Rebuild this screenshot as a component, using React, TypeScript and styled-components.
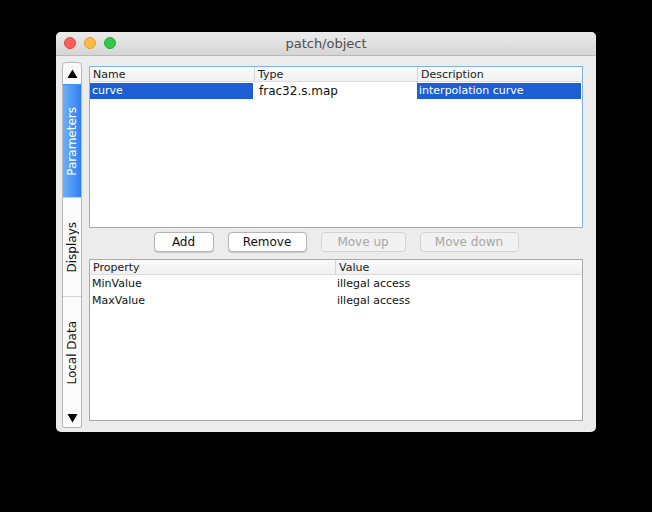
import React from "react";
import styled, { createGlobalStyle } from "styled-components";

const Global = createGlobalStyle`
  html, body { margin: 0; padding: 0; background: #000; }
  body { font-family: "DejaVu Sans", "Liberation Sans", sans-serif; }
  * { box-sizing: border-box; }
`;

const Page = styled.div`
  width: 652px;
  height: 512px;
  padding: 32px 0 0 56px;
  background: #000;
`;

const Window = styled.div`
  width: 540px;
  height: 400px;
  border-radius: 5px;
  overflow: hidden;
  background: #ececec;
  display: flex;
  flex-direction: column;
`;

const TitleBar = styled.div`
  height: 24px;
  flex: none;
  position: relative;
  display: flex;
  align-items: center;
  justify-content: center;
  background: linear-gradient(#ebebeb, #d5d5d5);
  border-bottom: 1px solid #b9b9b9;
`;

const Lights = styled.div`
  position: absolute;
  left: 8px;
  top: 5px;
  display: flex;
  gap: 8px;
`;

const Light = styled.span<{ $c: string; $b: string }>`
  width: 12px;
  height: 12px;
  border-radius: 50%;
  background: ${(p) => p.$c};
  border: 0.5px solid ${(p) => p.$b};
`;

const Title = styled.div`
  font-size: 13px;
  color: #4d4d4d;
`;

const Body = styled.div`
  flex: 1;
  display: flex;
  padding: 6px 13px 4px 6px;
  gap: 7px;
`;

const TabStrip = styled.div`
  width: 20px;
  flex: none;
  display: flex;
  flex-direction: column;
  background: #fafafa;
  border: 1px solid #b8b8b8;
  border-radius: 4px 4px 2px 2px;
  overflow: hidden;
`;

const Arrow = styled.div<{ $h: number }>`
  height: ${(p) => p.$h}px;
  flex: none;
  display: flex;
  align-items: center;
  justify-content: center;
`;

const Tab = styled.div<{ $h: number; $active?: boolean }>`
  height: ${(p) => p.$h}px;
  flex: none;
  display: flex;
  align-items: center;
  justify-content: center;
  padding-right: 1px;
  border-top: 1px solid ${(p) => (p.$active ? "#4a90ee" : "#d0d0d0")};
  background: ${(p) =>
    p.$active ? "linear-gradient(90deg, #6cb0f8, #2f7ff1)" : "#fbfbfb"};
  color: ${(p) => (p.$active ? "#fff" : "#111")};
`;

const TabLabel = styled.span`
  writing-mode: vertical-rl;
  transform: rotate(180deg);
  font-size: 12px;
  white-space: nowrap;
`;

const Main = styled.div`
  flex: 1;
  display: flex;
  flex-direction: column;
  padding: 4px 0 7px 0;
`;

const Table = styled.div<{ $focus?: boolean }>`
  height: 162px;
  flex: none;
  background: #fff;
  border: 1px solid ${(p) => (p.$focus ? "#7fb2e5" : "#a9a9a9")};
  display: flex;
  flex-direction: column;
`;

const HeaderRow = styled.div<{ $cols: string }>`
  display: grid;
  grid-template-columns: ${(p) => p.$cols};
  height: 15px;
  background: linear-gradient(#fafafa, #f1f1f1);
  border-bottom: 1px solid #dcdcdc;
`;

const HeaderCell = styled.div`
  font-size: 11px;
  color: #1a1a1a;
  padding-left: 3px;
  line-height: 15px;
  border-left: 1px solid #d6d6d6;
  &:first-child { border-left: none; }
`;

const Row = styled.div<{ $cols: string }>`
  display: grid;
  grid-template-columns: ${(p) => p.$cols};
  height: 16px;
  margin-top: 1px;
`;

const Cell = styled.div<{ $sel?: boolean; $edit?: boolean }>`
  line-height: 16px;
  white-space: nowrap;
  overflow: hidden;
  padding-left: ${(p) => (p.$edit ? "5px" : "2px")};
  margin-right: 1px;
  background: ${(p) => (p.$sel ? "#1d5fd2" : "transparent")};
  color: ${(p) => (p.$sel ? "#fff" : "#111")};
  font-size: ${(p) => (p.$edit ? "12px" : "11px")};
`;

const ButtonBar = styled.div`
  height: 31px;
  flex: none;
  display: flex;
  justify-content: center;
  align-items: flex-start;
  padding-top: 4px;
  gap: 14px;
`;

const Button = styled.button<{ $w: number }>`
  width: ${(p) => p.$w}px;
  height: 20px;
  padding: 0;
  font-family: "DejaVu Sans", sans-serif;
  font-size: 12px;
  border-radius: 4px;
  background: ${(p) => (p.disabled ? "#f1f1f1" : "#ffffff")};
  color: ${(p) => (p.disabled ? "#a6a6a6" : "#111")};
  border: 1px solid ${(p) => (p.disabled ? "#d3d3d3" : "#b4b4b4")};
  box-shadow: ${(p) => (p.disabled ? "none" : "0 0.5px 1px rgba(0,0,0,0.15)")};
`;

const Triangle = ({ down }: { down?: boolean }) => (
  <svg width="11" height="10" viewBox="0 0 11 10">
    <polygon points={down ? "0.5,1 10.5,1 5.5,9.5" : "0.5,9 10.5,9 5.5,0.5"} fill="#000" />
  </svg>
);

const COLS3 = "164px 163px 1fr";
const COLS2 = "245px 1fr";

export default function App() {
  return (
    <Page>
      <Global />
      <Window>
        <TitleBar>
          <Lights>
            <Light $c="#fc605c" $b="#de4a45" />
            <Light $c="#fdbc40" $b="#dea236" />
            <Light $c="#34c84a" $b="#27aa35" />
          </Lights>
          <Title>patch/object</Title>
        </TitleBar>
        <Body>
          <TabStrip>
            <Arrow $h={21}>
              <Triangle />
            </Arrow>
            <Tab $h={113} $active>
              <TabLabel>Parameters</TabLabel>
            </Tab>
            <Tab $h={99}>
              <TabLabel>Displays</TabLabel>
            </Tab>
            <Tab $h={112}>
              <TabLabel>Local Data</TabLabel>
            </Tab>
            <Arrow $h={19}>
              <Triangle down />
            </Arrow>
          </TabStrip>
          <Main>
            <Table $focus>
              <HeaderRow $cols={COLS3}>
                <HeaderCell>Name</HeaderCell>
                <HeaderCell>Type</HeaderCell>
                <HeaderCell>Description</HeaderCell>
              </HeaderRow>
              <Row $cols={COLS3}>
                <Cell $sel>curve</Cell>
                <Cell $edit>frac32.s.map</Cell>
                <Cell $sel>interpolation curve</Cell>
              </Row>
            </Table>
            <ButtonBar>
              <Button $w={60}>Add</Button>
              <Button $w={79}>Remove</Button>
              <Button $w={85} disabled>
                Move up
              </Button>
              <Button $w={99} disabled>
                Move down
              </Button>
            </ButtonBar>
            <Table>
              <HeaderRow $cols={COLS2}>
                <HeaderCell>Property</HeaderCell>
                <HeaderCell>Value</HeaderCell>
              </HeaderRow>
              <Row $cols={COLS2}>
                <Cell>MinValue</Cell>
                <Cell>illegal access</Cell>
              </Row>
              <Row $cols={COLS2}>
                <Cell>MaxValue</Cell>
                <Cell>illegal access</Cell>
              </Row>
            </Table>
          </Main>
        </Body>
      </Window>
    </Page>
  );
}
